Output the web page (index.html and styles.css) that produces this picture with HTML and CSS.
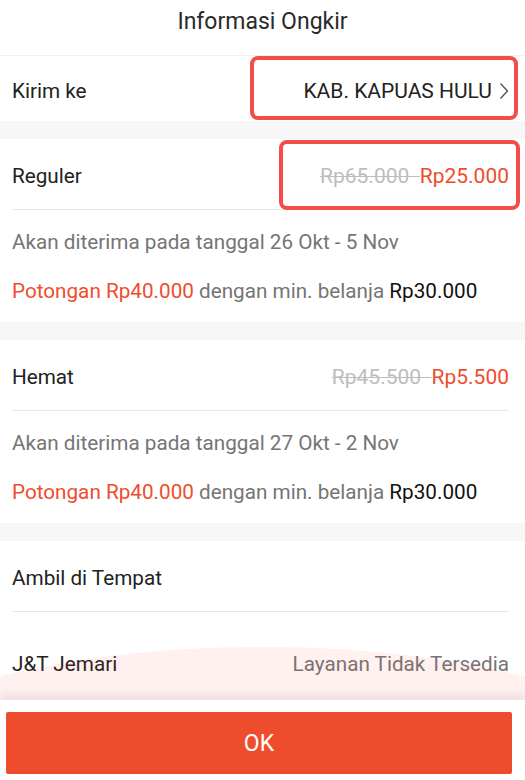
FILE: index.html
```html
<!DOCTYPE html>
<html lang="id">
<head>
<meta charset="utf-8">
<link rel="stylesheet" href="styles.css">
</head>
<body>
<div class="sheet">
  <div class="title">Informasi Ongkir</div>
  <div class="scroll">
    <section class="card">
      <div class="row">
        <span class="label">Kirim ke</span>
        <span class="dest">KAB. KAPUAS HULU
          <svg class="chev" width="10" height="18" viewBox="0 0 10 18"><path d="M1.5 1.5 L8.5 9 L1.5 16.5" fill="none" stroke="#555" stroke-width="1.4"/></svg>
        </span>
        <div class="mark mark1"></div>
      </div>
    </section>
    <section class="card">
      <div class="row bordered">
        <span class="label">Reguler</span>
        <span class="price"><s>Rp65.000&nbsp; </s><b>Rp25.000</b></span>
        <div class="mark mark2"></div>
      </div>
      <div class="info">Akan diterima pada tanggal 26 Okt - 5 Nov</div>
      <div class="promo"><span class="hl">Potongan Rp40.000</span> dengan min. belanja <span class="dk">Rp30.000</span></div>
    </section>
    <section class="card">
      <div class="row bordered">
        <span class="label">Hemat</span>
        <span class="price"><s>Rp45.500&nbsp; </s><b>Rp5.500</b></span>
      </div>
      <div class="info">Akan diterima pada tanggal 27 Okt - 2 Nov</div>
      <div class="promo"><span class="hl">Potongan Rp40.000</span> dengan min. belanja <span class="dk">Rp30.000</span></div>
    </section>
    <section class="card">
      <div class="row bordered">
        <span class="label">Ambil di Tempat</span>
      </div>
      <div class="row tall">
        <span class="label">J&amp;T Jemari</span>
        <span class="na">Layanan Tidak Tersedia</span>
      </div>
    </section>
    <div class="glow"></div>
  </div>
  <footer class="footer">
    <button class="ok">OK</button>
  </footer>
</div>
</body>
</html>
```
FILE: styles.css
```css
* { box-sizing: border-box; }
html, body { margin: 0; padding: 0; }
body {
  width: 525px;
  height: 780px;
  overflow: hidden;
  background: #fff;
  font-family: Roboto, "Noto Sans", sans-serif;
  color: #222;
}
.sheet { display: flex; flex-direction: column; height: 780px; }
.title {
  height: 56px;
  flex: none;
  display: flex;
  align-items: center;
  justify-content: center;
  font-size: 23px;
  color: #2a2a2a;
  padding-bottom: 12px;
  border-bottom: 1px solid #f0f0f0;
}
.scroll {
  flex: 1;
  overflow: hidden;
  position: relative;
  background: #f7f7f7;
  display: flex;
  flex-direction: column;
  gap: 18px;
}
.card { background: #fff; padding: 0 0 0 12px; flex: none; }
.row {
  position: relative;
  height: 66px;
  display: flex;
  align-items: center;
  justify-content: space-between;
  padding-right: 16px;
  font-size: 20.7px;
  padding-top: 3px;
}
.card:first-child .row { height: 65px; padding-top: 4px; }
.row.bordered { height: 71px; border-bottom: 1px solid #e8e8e8; margin-right: 16px; padding-right: 0; padding-top: 4px; }
.row.tall { height: 100px; padding-bottom: 0; }
.label { color: #222; }
.dest { display: flex; align-items: center; gap: 7px; color: #222; font-size: 21px; }
.chev { display: block; }
.price { font-size: 21px; }
.price s { color: #bdbdbd; text-decoration-thickness: 1px; }
.price b { font-weight: 400; color: #ee4d2d; }
.info { font-size: 20.7px; color: #757575; height: 64px; padding-top: 20px; }
.promo { font-size: 20.7px; color: #757575; height: 48px; padding-top: 5px; }
.hl { color: #ee4d2d; }
.dk { color: #111; }
.na { color: #757575; font-size: 20.7px; }
.mark {
  position: absolute;
  border: 4px solid #f44b4b;
  border-radius: 8px;
}
.mark1 { left: 238px; top: 0; width: 268px; height: 64px; }
.mark2 { left: 267px; top: 1px; width: 241px; height: 70px; }
.glow {
  position: absolute;
  left: -138px;
  top: 591px;
  width: 800px;
  height: 240px;
  border-radius: 50%;
  background: rgba(238, 77, 45, 0.08);
  pointer-events: none;
}
.footer {
  flex: none;
  height: 80px;
  background: #fff;
  box-shadow: 0 -6px 8px rgba(0,0,0,0.07);
  padding: 12px 13px 6px 6px;
  position: relative;
}
.ok {
  width: 100%;
  height: 62px;
  border: none;
  border-radius: 2px;
  background: #ee4d2d;
  color: #fff;
  font-family: Roboto, sans-serif;
  font-size: 23px;
}
```
